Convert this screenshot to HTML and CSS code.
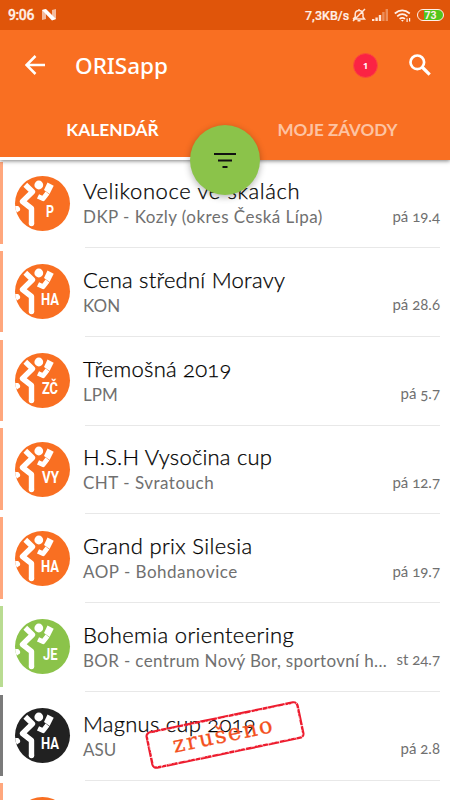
FILE: index.html
```html
<!DOCTYPE html>
<html lang="cs">
<head>
<meta charset="utf-8">
<title>ORISapp</title>
<link rel="stylesheet" href="styles.css">
</head>
<body>
<svg class="defs" width="0" height="0" aria-hidden="true">
  <symbol id="runner" viewBox="0 0 55 55">
    <g fill="none" stroke="#fff" stroke-linejoin="round">
      <path d="M10.300 8.800 17.500 15.800 7.500 25.500 16.500 32.500V47.500" stroke-width="5.400"/>
      <path d="M23 20.300 28 22.700 32.500 17" stroke-width="4.800"/>
    </g>
    <g fill="#fff">
      <circle cx="23.800" cy="9" r="4.400"/>
      <circle cx="16.500" cy="47.500" r="2.700"/>
      <path d="M32.500 6.500 38.700 9.700 34.600 18 29 14Z"/>
      <path d="M0 30 3.200 30Q6.200 32.500 4.800 34.500L2 36.400 0 34Z"/>
    </g>
  </symbol>
</svg>
<header class="top">
  <div class="status">
    <span class="clock">9:06</span>
    <svg class="nlogo" viewBox="0 0 14 12"><path d="M0 1 4 0v10L0 11ZM10 1l4-1v10l-4 1Z" fill="#fff" opacity=".6"/><path d="M0 1 4 0 14 10 10 11.500Z" fill="#fff"/></svg>
    <span class="speed">7,3KB/s</span>
    <svg class="mute" viewBox="0 0 14 14"><g fill="none" stroke="#ffe6d8" stroke-width="1.500"><path d="M1 11h11.500L11 9V6Q10.500 2.500 7 2.500T3.200 6V9L1 11M5.500 12.700h3M13 1 1 13M7 1v1.500"/></g></svg>
    <svg class="signal" viewBox="0 0 16 12"><g fill="#ffe6d8"><path d="M0 10h2.400v2H0ZM3.400 8.500h2.400V12H3.400ZM6.800 6h2.400v6H6.800Z"/><path d="M10.200 3h2.400v9h-2.400ZM13.600 0H16v12h-2.400Z" opacity=".4"/></g></svg>
    <svg class="wifi" viewBox="0 0 17 13"><g fill="none" stroke="#fff0e8" stroke-width="1.700"><path d="M.8 4.500Q8.200-1.800 15.800 4.500M3.200 7.300Q8.200 3 13.400 7.300M5.600 9.900Q8.200 7.800 11 9.900"/></g><path d="M7 11h2.800L8.400 12.800ZM12.500 9.500h1.200V13h-1.200ZM15 9h1.200v3.500h-1.200Z" fill="#fff0e8"/></svg>
    <span class="battery">73</span>
  </div>
  <div class="bar">
    <svg class="back" viewBox="0 0 20 20"><path d="M20 10H2M10.500 1 1.500 10l9 9" fill="none" stroke="#fff" stroke-width="2.500"/></svg>
    <h1 class="app">ORISapp</h1>
    <span class="badge">1</span>
    <svg class="search" viewBox="0 0 22 22"><circle cx="8.300" cy="8.300" r="6.800" fill="none" stroke="#fff" stroke-width="2.700"/><path d="M13 13 20.700 20.700" stroke="#fff" stroke-width="3.200"/></svg>
  </div>
  <nav class="tabs">
    <span class="tab active"><b>KALENDÁŘ</b></span>
    <span class="tab"><b>MOJE ZÁVODY</b></span>
  </nav>
  <button class="fab" aria-label="Filtr"><svg viewBox="0 0 22 15"><path d="M0 1h22M4 7.500h14M8.500 14h5" stroke="#111" stroke-width="2"/></svg></button>
</header>
<main class="list">
  <article class="row">
    <svg class="avatar" viewBox="0 0 55 55"><use href="#runner"/><text x="31" y="40.500" textLength="8" lengthAdjust="spacingAndGlyphs">P</text></svg>
    <div class="body"><h2 class="n1">Velikonoce ve skalách</h2><p class="s1">DKP - Kozly (okres Česká Lípa)</p></div><time>pá 19.4</time>
  </article>
  <article class="row">
    <svg class="avatar" viewBox="0 0 55 55"><use href="#runner"/><text x="26" y="40.500" textLength="18" lengthAdjust="spacingAndGlyphs">HA</text></svg>
    <div class="body"><h2 class="n2">Cena střední Moravy</h2><p class="s2">KON</p></div><time>pá 28.6</time>
  </article>
  <article class="row">
    <svg class="avatar" viewBox="0 0 55 55"><use href="#runner"/><text x="27" y="40.500" textLength="16" lengthAdjust="spacingAndGlyphs">ZČ</text></svg>
    <div class="body"><h2 class="n3">Třemošná 2019</h2><p class="s3">LPM</p></div><time>pá 5.7</time>
  </article>
  <article class="row">
    <svg class="avatar" viewBox="0 0 55 55"><use href="#runner"/><text x="27" y="40.500" textLength="17" lengthAdjust="spacingAndGlyphs">VY</text></svg>
    <div class="body"><h2 class="n4">H.S.H Vysočina cup</h2><p class="s4">CHT - Svratouch</p></div><time>pá 12.7</time>
  </article>
  <article class="row">
    <svg class="avatar" viewBox="0 0 55 55"><use href="#runner"/><text x="26" y="40.500" textLength="18" lengthAdjust="spacingAndGlyphs">HA</text></svg>
    <div class="body"><h2 class="n5">Grand prix Silesia</h2><p class="s5">AOP - Bohdanovice</p></div><time>pá 19.7</time>
  </article>
  <article class="row green">
    <svg class="avatar" viewBox="0 0 55 55"><use href="#runner"/><text x="28" y="40.500" textLength="14.500" lengthAdjust="spacingAndGlyphs">JE</text></svg>
    <div class="body"><h2 class="n6">Bohemia orienteering</h2><p class="s6">BOR - centrum Nový Bor, sportovní h...</p></div><time>st 24.7</time>
  </article>
  <article class="row dark">
    <svg class="avatar" viewBox="0 0 55 55"><use href="#runner"/><text x="26" y="40.500" textLength="18" lengthAdjust="spacingAndGlyphs">HA</text></svg>
    <div class="body"><h2 class="n7">Magnus cup 2019</h2><p class="s7">ASU</p></div><time>pá 2.8</time>
    <svg class="stamp" viewBox="0 0 160 70"><g transform="rotate(-11.800 80 35)"><rect x="3" y="17" width="154" height="36" rx="4" fill="none" stroke="#ed1c2e" stroke-width="2.400" stroke-dasharray="11 .5 5 .4 17 .7"/><rect x="4" y="18.200" width="152" height="33.800" rx="3" fill="none" stroke="#fff" stroke-width=".6" stroke-dasharray="2 3 1 2 4 5"/><text x="27" y="42" textLength="101">zrušeno</text></g></svg>
  </article>
  <article class="row last">
    <svg class="avatar" viewBox="0 0 55 55"><use href="#runner"/></svg>
  </article>
</main>
</body>
</html>
```
FILE: styles.css
```css
* { box-sizing: border-box; }
body { margin: 0; width: 450px; height: 800px; overflow: hidden; background: #fff; font-family: Lato, sans-serif; }
.defs { position: absolute; }
h1, h2, p { margin: 0; white-space: nowrap; }
.top { position: relative; z-index: 2; height: 160px; background: #f96f22; box-shadow: 0 1px 4px rgba(0,0,0,.5); display: flex; flex-direction: column; color: #fff; }
.status { height: 30px; background: #e0550a; display: flex; align-items: center; padding: 0 6px 0 8px; font: 500 12.500px Roboto, sans-serif; color: #fff0e8; }
.clock { font-size: 14px; width: 34px; letter-spacing: -.4px; -webkit-text-stroke: .3px; }
.nlogo { width: 14px; height: 12px; }
.speed { margin-left: auto; width: 47px; white-space: nowrap; -webkit-text-stroke: .2px; }
.mute { width: 14px; height: 14px; }
.signal { width: 16px; height: 12px; margin-left: 6px; }
.wifi { width: 17px; height: 13px; margin-left: 6px; }
.battery { width: 27px; height: 12px; margin-left: 6px; border: 1.500px solid #fff0e8; border-radius: 6px; background: linear-gradient(90deg, #e0550a 25%, #51c51b 25%); font: bold 10.500px/11px Roboto, sans-serif; text-align: center; }
.bar { height: 70px; display: flex; align-items: center; padding: 0 19px 0 25px; }
.back { width: 20px; height: 20px; }
.app { margin-left: 30px; font: 500 22.500px "Noto Sans", sans-serif; }
.badge { margin-left: auto; width: 25px; height: 25px; border-radius: 50%; background: #fb2344; border: 1.500px solid #fc4d3a; font: bold 9px/23px "Open Sans", sans-serif; text-align: center; }
.search { width: 22px; height: 22px; margin-left: 31px; }
.tabs { flex: 1; display: flex; }
.tab { flex: 1; text-align: center; font-size: 17px; line-height: 60px; color: #fdc3a2; border-bottom: 3px solid transparent; height: 60px; }
.tab.active { color: #fff; border-color: #fff; font-size: 17.400px; }
.fab { position: absolute; left: 190px; top: 125px; width: 70px; height: 70px; border: 0; border-radius: 50%; background: #8bc34a; box-shadow: 0 2px 7px rgba(0,0,0,.3); padding: 0; }
.fab svg { display: block; width: 22px; height: 15px; margin: 0 auto; }
.list { padding-top: 2px; height: 640px; overflow: hidden; }
.row { position: relative; height: 88.750px; display: flex; padding: 0 10px 0 15px; --c: #f96f22; --edge: #ffa77d; }
.row::before { content: ""; position: absolute; left: 0; top: 0; width: 2.700px; height: 81.500px; background: var(--edge); }
.row::after { content: ""; position: absolute; left: 85px; right: 10px; top: 85px; height: 1px; background: #e8e8e8; }
.green { --c: #8bc34a; --edge: #b9dc92; }
.dark { --c: #212121; --edge: #7a7a7a; }
.last { height: 16.750px; overflow: hidden; }
.avatar { flex: none; width: 55px; height: 55px; margin-top: 13.500px; border-radius: 50%; background: var(--c); }
.avatar text { font: bold 16px Roboto, sans-serif; fill: #fff; }
.body { margin-left: 13px; padding-top: 14.200px; flex: 1; min-width: 0; }
h2 { font: 300 22px/30px Lato, sans-serif; color: #000; font-feature-settings: "onum"; -webkit-text-stroke: .25px #000; }
.n1 { letter-spacing: .62px; }
.n2 { letter-spacing: .25px; }
.n3, .n7 { letter-spacing: .25px; }
.n4 { letter-spacing: .2px; }
.n5 { letter-spacing: .35px; }
.n6 { letter-spacing: .37px; }
.body p { font: 400 17px/22px Lato, sans-serif; color: #707070; margin-top: -.200px; }
.s1 { letter-spacing: .45px; }
.s4, .s5 { letter-spacing: .5px; }
.s6 { letter-spacing: .35px; }
time { font: 400 15px/20px Lato, sans-serif; color: #707070; margin-top: 43.500px; font-feature-settings: "onum"; white-space: nowrap; }
.stamp { position: absolute; left: 145px; top: 5.500px; width: 160px; height: 70px; }
.stamp text { font: 400 22.500px "DejaVu Serif", serif; fill: #f4501c; stroke: #f4501c; stroke-width: .3px; }
```
